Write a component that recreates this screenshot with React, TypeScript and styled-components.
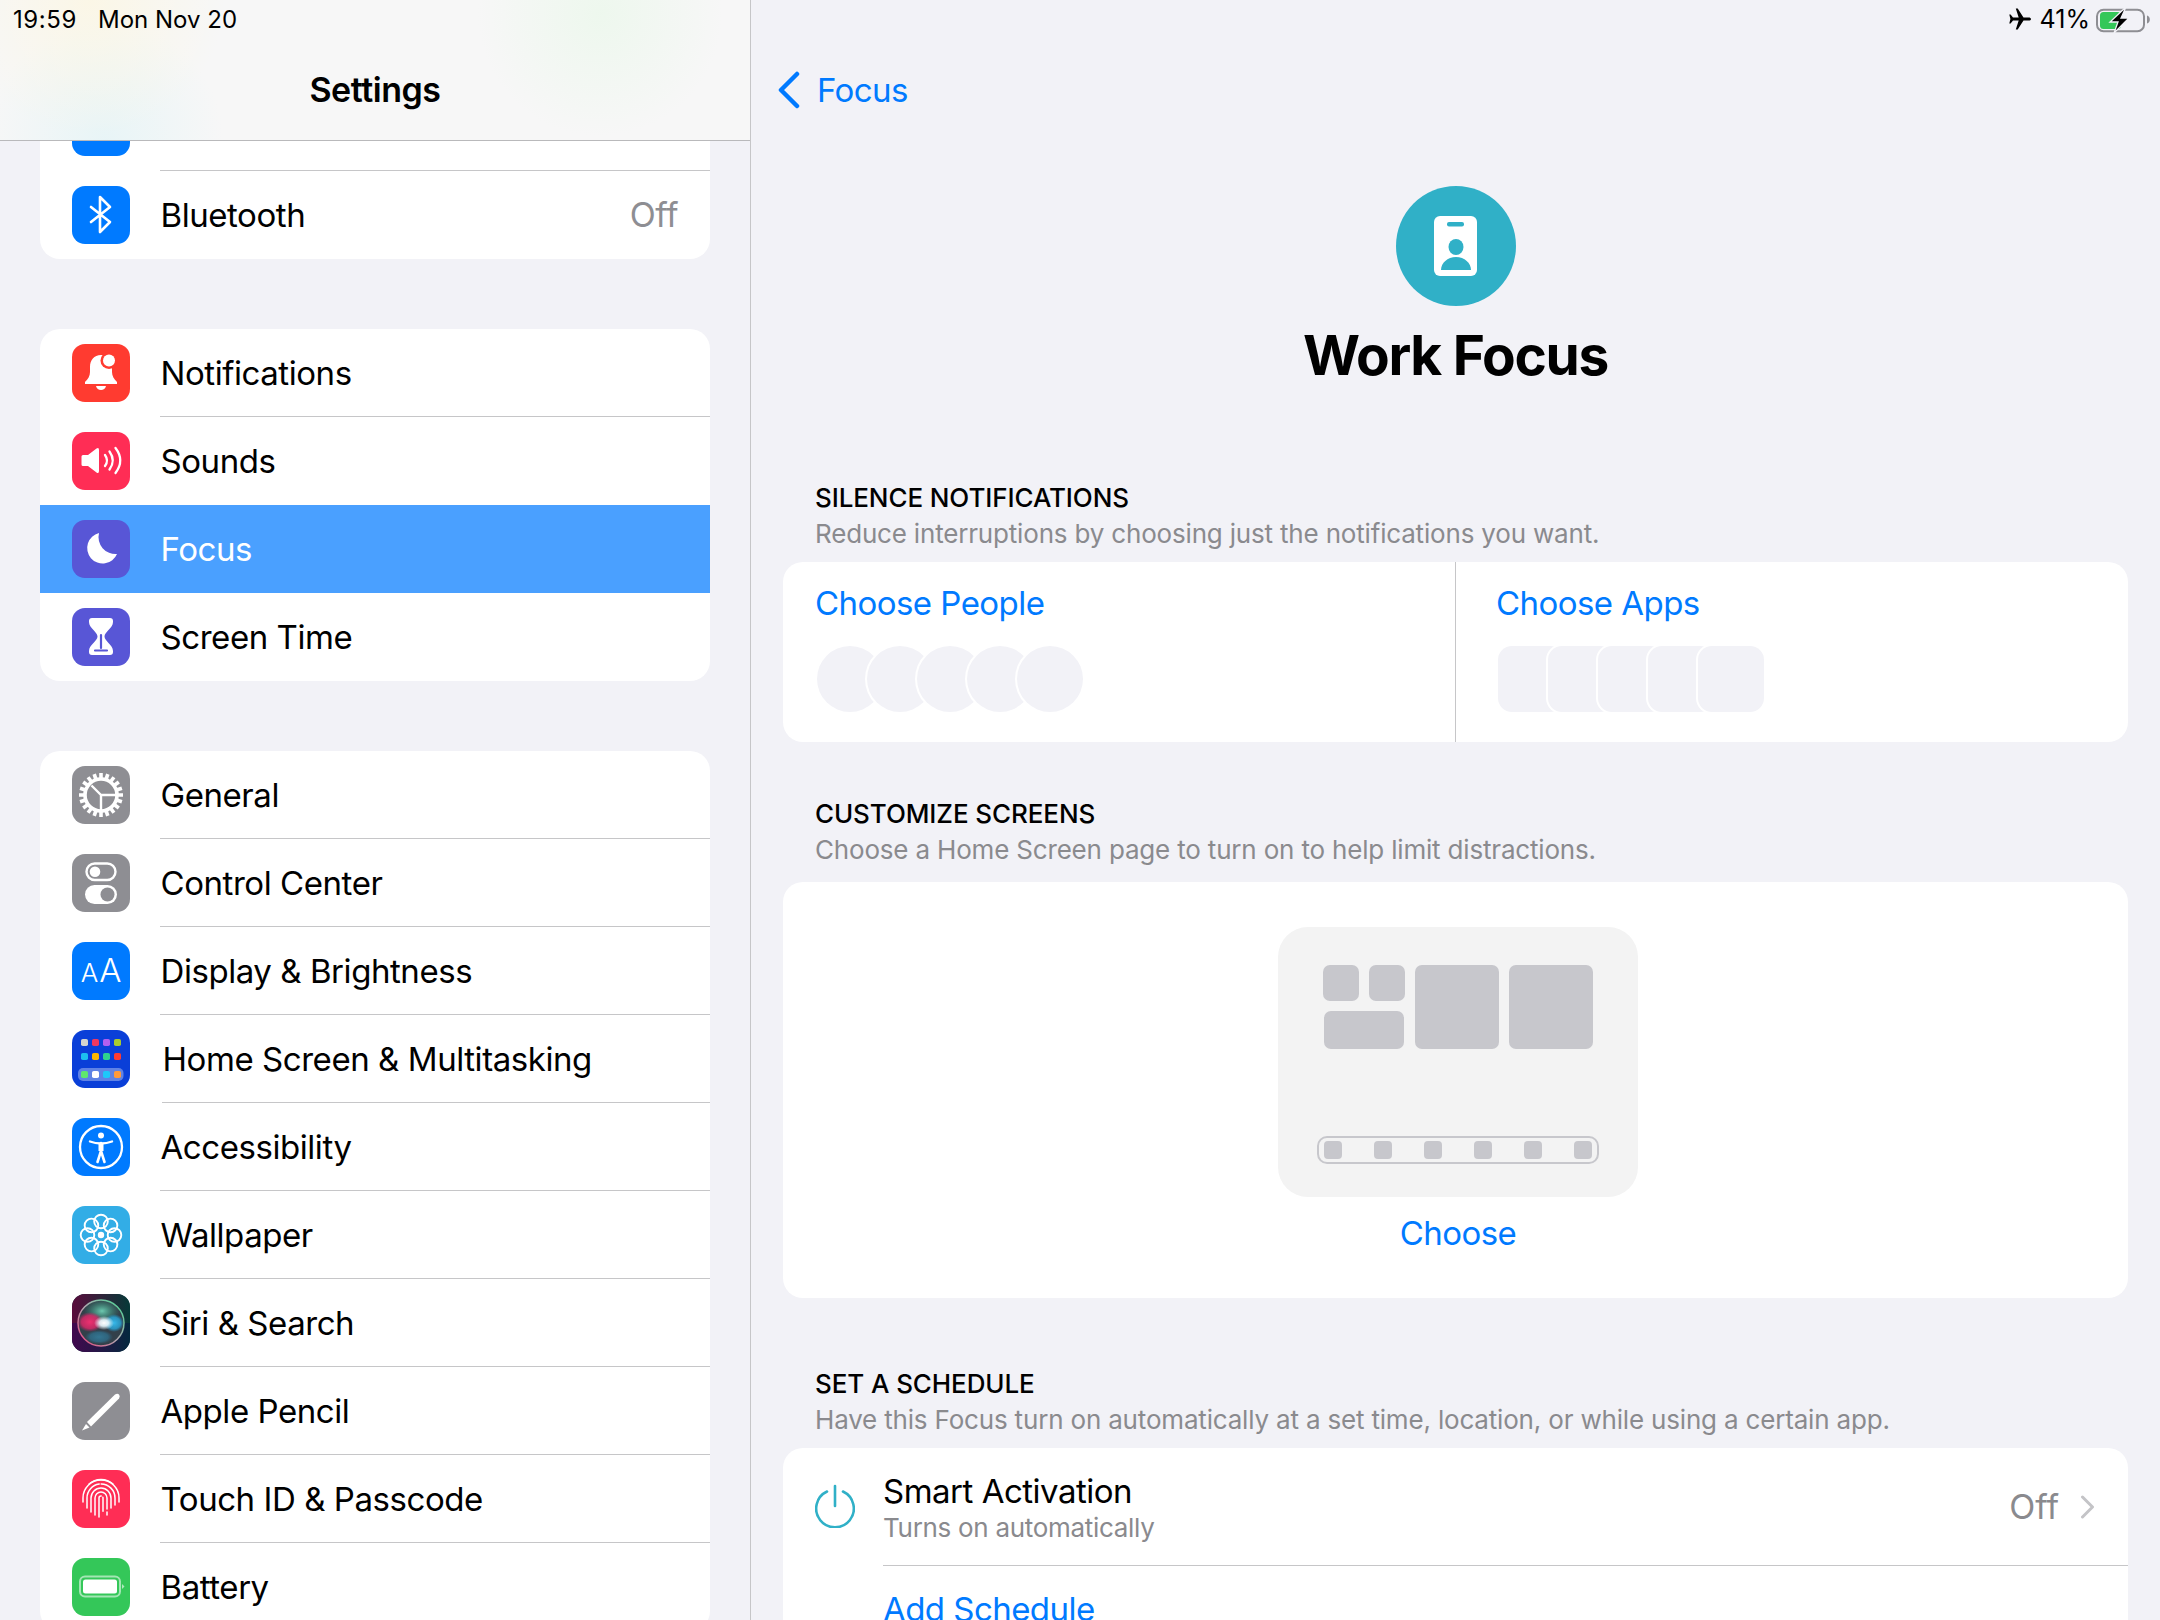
import React, { ReactNode } from 'react';
import styled, { createGlobalStyle } from 'styled-components';

const GlobalStyle = createGlobalStyle`
  html, body {
    margin: 0;
    padding: 0;
    background: #f2f2f7;
    font-family: Inter, "Noto Sans", sans-serif;
    color: #000;
  }
  * { box-sizing: border-box; }
`;

const Screen = styled.div`
  display: flex;
  width: 2160px;
  height: 1620px;
  overflow: hidden;
  background: #f2f2f7;
`;

/* ---------- sidebar ---------- */

const Sidebar = styled.aside`
  display: flex;
  flex-direction: column;
  width: 751px;
  height: 100%;
  border-right: 1px solid #c6c6c8;
  overflow: hidden;
`;

const SidebarHeader = styled.header`
  position: relative;
  z-index: 2;
  flex: none;
  height: 141px;
  border-bottom: 1px solid #b9b9bb;
  background:
    radial-gradient(circle at 12% 0%, rgba(255, 246, 214, 0.5), transparent 20%),
    radial-gradient(circle at 80% 10%, rgba(226, 248, 226, 0.45), transparent 20%),
    radial-gradient(circle at 14% 100%, rgba(222, 243, 246, 0.6), transparent 18%),
    #f7f7f7;
`;

const Clock = styled.div`
  display: flex;
  gap: 21px;
  height: 40px;
  padding-left: 13px;
  font-size: 24px;
  line-height: 40px;
`;

const ClockTime = styled.span`
  letter-spacing: 0.6px;
`;

const SidebarTitle = styled.h1`
  margin: 0;
  height: 66px;
  margin-top: 17px;
  text-align: center;
  font-size: 34px;
  line-height: 66px;
  font-weight: 600;
  letter-spacing: -0.45px;
`;

const SidebarScroll = styled.div`
  flex: 1;
  min-height: 0;
  overflow: hidden;
`;

const SidebarContent = styled.div`
  display: flex;
  flex-direction: column;
  margin-top: -58px;
  padding: 0 40px;
`;

const Group = styled.section<{ $after?: number }>`
  flex: none;
  margin-bottom: ${(p) => p.$after ?? 70}px;
  border-radius: 20px;
  background: #fff;
  overflow: hidden;
`;

const Row = styled.div<{ $selected?: boolean }>`
  display: flex;
  align-items: center;
  height: 88px;
  padding-left: 32px;
  background: ${(p) => (p.$selected ? '#4aa0ff' : 'transparent')};
  color: ${(p) => (p.$selected ? '#fff' : '#000')};
`;

const Tile = styled.div<{ $bg: string }>`
  position: relative;
  flex: none;
  width: 58px;
  height: 58px;
  border-radius: 13px;
  background: ${(p) => p.$bg};
  overflow: hidden;
  svg { display: block; }
`;

const RowBody = styled.div<{ $line?: boolean; $shift?: number }>`
  display: flex;
  align-items: center;
  justify-content: space-between;
  flex: 1;
  height: 100%;
  margin-left: ${(p) => 30 + (p.$shift ?? 0)}px;
  padding-right: 32px;
  border-bottom: 1px solid ${(p) => (p.$line ? '#c6c6c8' : 'transparent')};
`;

const RowLabel = styled.span`
  padding-left: 0.5px;
  font-size: 33px;
  line-height: 42px;
  letter-spacing: -0.44px;
`;

const RowValue = styled.span`
  font-size: 34px;
  line-height: 42px;
  color: #8e8e93;
  letter-spacing: -0.5px;
`;

const LetterMark = styled.div`
  display: flex;
  align-items: baseline;
  justify-content: center;
  gap: 1px;
  height: 100%;
  padding-top: 7px;
  color: #fff;
  font-weight: 300;
`;

const SmallLetter = styled.span`
  font-size: 26px;
  line-height: 42px;
`;

const LargeLetter = styled.span`
  font-size: 33px;
  line-height: 42px;
`;

/* ---------- sidebar icons ---------- */

const Draw = ({ children }: { children: ReactNode }) => (
  <svg width="58" height="58" viewBox="0 0 58 58" fill="none">
    {children}
  </svg>
);

const BluetoothIcon = () => (
  <Draw>
    <path d="M19 21 38 36 28 46V11l10 10-19 15" stroke="#fff" strokeWidth="2.6" strokeLinejoin="round" strokeLinecap="round" />
  </Draw>
);

const BellIcon = () => (
  <Draw>
    <path d="M29 11c-7 0-11 5-11 12v5c0 4-2 7-5 10v2h32v-2c-3-3-5-6-5-10v-5c0-7-4-12-11-12z" fill="#fff" />
    <path d="M24 42h10c-.6 2.6-2.6 4-5 4s-4.400-1.400-5-4z" fill="#fff" />
    <circle cx="37" cy="16.500" r="8.500" fill="#ff3b30" />
    <circle cx="37" cy="16.500" r="6" fill="#fff" />
  </Draw>
);

const SpeakerIcon = () => (
  <Draw>
    <path d="M11 23h5l8.500-6.500q2.500-1.500 2.500 1.500v21q0 3-2.500 1.500L16 34h-5q-1.500 0-1.500-1.500v-8q0-1.500 1.500-1.500z" fill="#fff" />
    <path d="M33 23q4 5.500 0 11M37.500 19.500q6.500 9 0 18M43.500 16q9.500 12.500 0 25" stroke="#fff" strokeWidth="2.300" strokeLinecap="round" />
  </Draw>
);

const MoonIcon = () => (
  <Draw>
    <path d="M27 13A15.500 15.500 0 1 0 45 34 17 17 0 0 1 27 13z" fill="#fff" />
  </Draw>
);

const HourglassIcon = () => (
  <Draw>
    <path d="M20 10h18q3 0 3 3v1c0 6-8.500 10-8.500 14.500S41 37 41 43v1q0 3-3 3H20q-3 0-3-3v-1c0-6 8.500-10 8.500-14.500S17 20 17 14v-1q0-3 3-3z" fill="#fff" />
    <path d="M29 27v13M23 42.500h12" stroke="#5856d6" strokeWidth="2.200" strokeLinecap="round" />
  </Draw>
);

const GearIcon = () => (
  <Draw>
    {Array.from({ length: 20 }, (_, i) => (
      <line key={i} x1="29" y1="7" x2="29" y2="12" stroke="#fff" strokeWidth="3.600" transform={`rotate(${i * 18} 29 29)`} />
    ))}
    <circle cx="29" cy="29" r="16" stroke="#fff" strokeWidth="3.600" />
    <path d="M29 29 19.500 19.500M29 29H45M29 29V44.500" stroke="#fff" strokeWidth="2.400" />
  </Draw>
);

const SwitchesIcon = () => (
  <Draw>
    <rect x="14.500" y="9.500" width="29" height="16.500" rx="8.250" stroke="#fff" strokeWidth="2.400" />
    <circle cx="23" cy="17.800" r="5.300" fill="#fff" />
    <rect x="13" y="31" width="32" height="19" rx="9.500" fill="#fff" />
    <circle cx="35.500" cy="40.500" r="7" fill="#8e8e93" />
  </Draw>
);

const SpringPads = [
  ['#d4d4cf', '#f0385f', '#b25ff0', '#a8cc2e'],
  ['#1cc0f0', '#fcb800', '#2fd08f', '#ff3b30'],
  ['#5fe86d', '#ffffff', '#1dc8fa', '#ff9a3c'],
];

const HomeGridIcon = () => (
  <Draw>
    <rect x="6" y="38" width="45.500" height="13" rx="5" fill="#fff" opacity="0.35" />
    {SpringPads.map((colors, r) =>
      colors.map((c, i) => (
        <rect key={`${r}-${i}`} x={9 + i * 11} y={[9, 23, 41][r]} width="7" height="7" rx="1.800" fill={c} />
      )),
    )}
  </Draw>
);

const AccessibilityIcon = () => (
  <Draw>
    <circle cx="29" cy="29" r="21" stroke="#fff" strokeWidth="2.300" />
    <circle cx="29" cy="17.500" r="3" fill="#fff" />
    <path d="M18 23.500c4 1.500 7 2 11 2s7-.5 11-2" stroke="#fff" strokeWidth="2.400" strokeLinecap="round" />
    <path d="M29 25v8l-3.500 11M29 33l3.500 11" stroke="#fff" strokeWidth="2.600" strokeLinecap="round" strokeLinejoin="round" />
    <path d="M26.500 25h5v8h-5z" fill="#fff" />
  </Draw>
);

const FlowerIcon = () => (
  <Draw>
    {Array.from({ length: 8 }, (_, i) => (
      <circle key={i} cx="29" cy="15.500" r="6.800" stroke="#fff" strokeWidth="1.900" transform={`rotate(${i * 45} 29 29)`} />
    ))}
    <circle cx="29" cy="29" r="3.200" fill="#fff" />
  </Draw>
);

const SiriIcon = () => (
  <Draw>
    <defs>
      <linearGradient id="siriTop" x1="0" y1="0" x2="1" y2="0">
        <stop offset="0" stopColor="#5a0c3c" />
        <stop offset="1" stopColor="#063a38" />
      </linearGradient>
      <linearGradient id="siriBottom" x1="0" y1="0" x2="1" y2="0">
        <stop offset="0" stopColor="#42084e" />
        <stop offset="1" stopColor="#04283e" />
      </linearGradient>
      <linearGradient id="siriRing" x1="0" y1="1" x2="1" y2="0">
        <stop offset="0" stopColor="#e8407a" />
        <stop offset="0.5" stopColor="#b0a8b0" />
        <stop offset="1" stopColor="#40d890" />
      </linearGradient>
      <radialGradient id="siriGlow">
        <stop offset="0" stopColor="#fff" />
        <stop offset="0.45" stopColor="#eafaff" stopOpacity="0.9" />
        <stop offset="1" stopColor="#e8f8ff" stopOpacity="0" />
      </radialGradient>
      <radialGradient id="siriPink">
        <stop offset="0" stopColor="#ee3070" />
        <stop offset="0.65" stopColor="#d82868" stopOpacity="0.85" />
        <stop offset="1" stopColor="#c02060" stopOpacity="0" />
      </radialGradient>
      <radialGradient id="siriBlue">
        <stop offset="0" stopColor="#36b8ea" />
        <stop offset="0.65" stopColor="#2aa0d0" stopOpacity="0.85" />
        <stop offset="1" stopColor="#2090c0" stopOpacity="0" />
      </radialGradient>
      <radialGradient id="siriGreen">
        <stop offset="0" stopColor="#6ec8b0" />
        <stop offset="1" stopColor="#30a080" stopOpacity="0" />
      </radialGradient>
    </defs>
    <rect width="58" height="29" fill="url(#siriTop)" />
    <rect y="29" width="58" height="29" fill="url(#siriBottom)" />
    <circle cx="29" cy="29" r="23" fill="#33404a" />
    <ellipse cx="30" cy="17" rx="18" ry="12" fill="url(#siriGreen)" />
    <ellipse cx="27" cy="43" rx="14" ry="7" fill="url(#siriBlue)" opacity="0.45" />
    <ellipse cx="18" cy="28" rx="13" ry="10" fill="url(#siriPink)" />
    <ellipse cx="42" cy="29" rx="10" ry="9" fill="url(#siriBlue)" />
    <circle cx="29" cy="29" r="23" stroke="url(#siriRing)" strokeWidth="1.500" />
    <ellipse cx="32" cy="29" rx="10" ry="7" fill="url(#siriGlow)" />
  </Draw>
);

const PencilIcon = () => (
  <Draw>
    <path d="M15 40 43 12.500q2.500-1.500 4 0t0 4L19 44.500z" fill="#fff" />
    <path d="M14 42l3.500 3.500-7.500 3z" fill="#fff" />
  </Draw>
);

const FingerprintIcon = () => (
  <Draw>
    <g stroke="#fff" strokeWidth="1.500" strokeLinecap="round">
      <path d="M11 32v-4a18 18 0 0 1 36 0v4" />
      <path d="M15 38v-10a14 14 0 0 1 28 0v7" strokeDasharray="30 2 40" />
      <path d="M19 42V28a10 10 0 0 1 20 0v10" />
      <path d="M23 45V28a6 6 0 0 1 12 0v11M35 42v3" />
      <path d="M27 47V28a2 2 0 0 1 4 0v19" strokeDasharray="22 2 14" />
      <path d="M17 14a18 18 0 0 1 24 0" />
    </g>
  </Draw>
);

const BatteryTileIcon = () => (
  <Draw>
    <rect x="8" y="18.500" width="40" height="20" rx="5" stroke="#fff" strokeOpacity="0.55" strokeWidth="2" />
    <rect x="11" y="21.500" width="34" height="14" rx="2.500" fill="#fff" />
    <path d="M50 26l2.500 2.500L50 31z" fill="#fff" fillOpacity="0.6" />
  </Draw>
);

interface SettingsRow {
  label?: string;
  tile: string;
  icon?: ReactNode;
  value?: string;
  selected?: boolean;
  shift?: number;
}

const groups: { after: number; rows: SettingsRow[] }[] = [
  {
    after: 70,
    rows: [
      { tile: '#007aff' },
      { label: 'Bluetooth', tile: '#007aff', icon: <BluetoothIcon />, value: 'Off' },
    ],
  },
  {
    after: 70,
    rows: [
      { label: 'Notifications', tile: '#ff3b30', icon: <BellIcon /> },
      { label: 'Sounds', tile: '#ff2d55', icon: <SpeakerIcon /> },
      { label: 'Focus', tile: '#5856d6', icon: <MoonIcon />, selected: true },
      { label: 'Screen Time', tile: '#5856d6', icon: <HourglassIcon /> },
    ],
  },
  {
    after: 0,
    rows: [
      { label: 'General', tile: '#8e8e93', icon: <GearIcon /> },
      { label: 'Control Center', tile: '#8e8e93', icon: <SwitchesIcon /> },
      {
        label: 'Display & Brightness',
        tile: '#007aff',
        icon: (
          <LetterMark>
            <SmallLetter>A</SmallLetter>
            <LargeLetter>A</LargeLetter>
          </LetterMark>
        ),
      },
      { label: 'Home Screen & Multitasking', tile: '#0a3fd8', icon: <HomeGridIcon />, shift: 2 },
      { label: 'Accessibility', tile: '#007aff', icon: <AccessibilityIcon /> },
      { label: 'Wallpaper', tile: '#32ade6', icon: <FlowerIcon /> },
      { label: 'Siri & Search', tile: '#123a44', icon: <SiriIcon /> },
      { label: 'Apple Pencil', tile: '#8e8e93', icon: <PencilIcon /> },
      { label: 'Touch ID & Passcode', tile: '#ff2d55', icon: <FingerprintIcon /> },
      { label: 'Battery', tile: '#34c759', icon: <BatteryTileIcon /> },
    ],
  },
];

/* ---------- detail pane ---------- */

const Pane = styled.main`
  display: flex;
  flex-direction: column;
  flex: 1;
  min-width: 0;
  height: 100%;
  padding: 0 32px;
  overflow: hidden;
`;

const StatusBar = styled.div`
  display: flex;
  align-items: center;
  justify-content: flex-end;
  flex: none;
  height: 38px;
  margin-right: -22px;
  font-size: 25px;
  svg { display: block; }
`;

const BatteryPercent = styled.span`
  margin: 0 4px 0 8px;
`;

const NavBar = styled.nav`
  display: flex;
  align-items: center;
  flex: none;
  height: 104px;
  margin-left: -6px;
  color: #007aff;
  font-size: 33px;
  letter-spacing: -0.6px;
  gap: 16px;
`;

const Hero = styled.div`
  display: flex;
  flex-direction: column;
  align-items: center;
  flex: none;
  margin-top: 44px;
`;

const Avatar = styled.div`
  width: 120px;
  height: 120px;
  border-radius: 50%;
  background: #30b0c7;
  svg { display: block; }
`;

const HeroTitle = styled.h2`
  margin: 15px 0 0;
  font-size: 55px;
  line-height: 68px;
  font-weight: 700;
  letter-spacing: -1.3px;
`;

const SectionLabel = styled.div<{ $top: number }>`
  flex: none;
  margin-top: ${(p) => p.$top}px;
  padding-left: 32px;
  font-size: 26px;
  line-height: 34px;
  font-weight: 500;
  letter-spacing: -0.1px;
`;

const SectionNote = styled.div<{ $after: number }>`
  flex: none;
  margin-bottom: ${(p) => p.$after}px;
  padding-left: 32px;
  font-size: 26px;
  line-height: 38px;
  color: #8a8a8e;
  letter-spacing: -0.18px;
`;

const Card = styled.section`
  flex: none;
  border-radius: 20px;
  background: #fff;
  overflow: hidden;
`;

const ChooserCard = styled(Card)`
  display: grid;
  grid-template-columns: 672px 1fr;
  height: 180px;
`;

const ChooserColumn = styled.div<{ $divided?: boolean; $left: number }>`
  padding: 20px 0 0 ${(p) => p.$left}px;
  border-left: ${(p) => (p.$divided ? '1px solid #c6c6c8' : 'none')};
`;

const LinkText = styled.div`
  color: #007aff;
  font-size: 33px;
  line-height: 42px;
  letter-spacing: -0.55px;
`;

const PlaceholderStack = styled.div`
  display: flex;
  margin: 22px 0 0 2px;
`;

const Placeholder = styled.div<{ $round: boolean }>`
  flex: none;
  width: 66px;
  height: 66px;
  border-radius: ${(p) => (p.$round ? '50%' : '14px')};
  background: #f2f2f7;
  &:not(:first-child) {
    margin-left: -16px;
    box-shadow: 0 0 0 2px #fff;
  }
`;

const ScreensCard = styled(Card)`
  display: flex;
  flex-direction: column;
  align-items: center;
  height: 416px;
  padding: 45px 0 0 5px;
`;

const PagePreview = styled.div`
  flex: none;
  width: 360px;
  height: 270px;
  padding: 38px 45px 0;
  border-radius: 30px;
  background: #f3f3f3;
`;

const WidgetRow = styled.div`
  display: flex;
  gap: 10px;
`;

const WidgetStack = styled.div`
  display: flex;
  flex-wrap: wrap;
  gap: 10px;
  width: 82px;
`;

const Widget = styled.div<{ $w: number; $h: number; $inset?: number }>`
  flex: none;
  width: ${(p) => p.$w}px;
  height: ${(p) => p.$h}px;
  margin-left: ${(p) => p.$inset ?? 0}px;
  border-radius: 7px;
  background: #c7c7cc;
`;

const Dock = styled.div`
  display: flex;
  align-items: center;
  justify-content: space-between;
  width: 282px;
  height: 28px;
  margin: 87px 0 0 -6px;
  padding: 0 5px;
  border: 2px solid #c7c7cc;
  border-radius: 10px;
`;

const DockSlot = styled.div`
  width: 18px;
  height: 18px;
  border-radius: 4px;
  background: #c7c7cc;
`;

const ChooseLink = styled(LinkText)`
  margin-top: 15px;
`;

const ScheduleCard = styled(Card)`
  height: 260px;
`;

const ScheduleRow = styled.div`
  display: flex;
  height: 118px;
  padding-left: 32px;
`;

const PowerSlot = styled.div`
  display: flex;
  align-items: center;
  flex: none;
  width: 40px;
  margin-right: 28px;
  padding-bottom: 2px;
  svg { display: block; }
`;

const ScheduleBody = styled.div`
  display: flex;
  align-items: center;
  justify-content: space-between;
  flex: 1;
  padding-right: 33px;
  border-bottom: 1px solid #c6c6c8;
`;

const ScheduleTitle = styled.div`
  font-size: 33px;
  line-height: 42px;
  letter-spacing: -0.5px;
`;

const ScheduleCaption = styled.div`
  font-size: 26px;
  line-height: 32px;
  color: #8a8a8e;
  letter-spacing: -0.3px;
`;

const Trailing = styled.div`
  display: flex;
  align-items: center;
  gap: 21px;
  color: #8a8a8e;
  font-size: 34px;
  svg { display: block; }
`;

const AddSchedule = styled(LinkText)`
  padding: 22px 0 0 100px;
`;

const AvatarBadge = () => (
  <svg width="120" height="120" viewBox="0 0 120 120">
    <rect x="38" y="30" width="43" height="60" rx="6" fill="#fff" />
    <rect x="51" y="36" width="17" height="4.500" rx="2" fill="#30b0c7" />
    <ellipse cx="60" cy="61" rx="7.500" ry="8" fill="#30b0c7" />
    <path d="M45 84c0-7 6.500-13 15-13s15 6 15 13z" fill="#30b0c7" />
  </svg>
);

const Airplane = () => (
  <svg width="24" height="24" viewBox="0 0 24 24" fill="#000">
    <path d="M23 12c0-1.100-1.100-1.600-2.200-1.600h-5.300L9.700 1.500H7.800l2.900 8.900H5L2.600 7.600H1.300L2.400 12 1.300 16.400h1.300L5 13.600h5.700L7.800 22.500h1.900l5.800-8.900h5.300C21.900 13.600 23 13.100 23 12z" />
  </svg>
);

const BatteryStatus = () => (
  <svg width="56" height="30" viewBox="0 0 56 30" fill="none">
    <rect x="3" y="5.700" width="47" height="21.500" rx="6.500" stroke="#8e8e93" strokeWidth="2" />
    <rect x="6" y="8" width="21" height="17" rx="3.500" fill="#34c759" />
    <path d="M53 11.500c1.800.6 2.800 2 2.800 4s-1 3.400-2.800 4z" fill="#8e8e93" />
    <path d="M32 3 16 18h8l-4 11 15-15h-8l5-11z" fill="#000" stroke="#f2f2f7" strokeWidth="1.300" />
  </svg>
);

const BackChevron = () => (
  <svg width="24" height="38" viewBox="0 0 24 38" fill="none">
    <path d="M20 3 4 19l16 16" stroke="#007aff" strokeWidth="4.500" strokeLinecap="round" strokeLinejoin="round" />
  </svg>
);

const PowerIcon = () => (
  <svg width="40" height="44" viewBox="0 0 40 44" fill="none">
    <path d="M12 7.500a18.800 18.800 0 1 0 16 0" stroke="#30b0c7" strokeWidth="2.600" strokeLinecap="round" />
    <path d="M20 2v20" stroke="#30b0c7" strokeWidth="2.600" strokeLinecap="round" />
  </svg>
);

const ForwardChevron = () => (
  <svg width="15" height="24" viewBox="0 0 15 24" fill="none">
    <path d="M2.500 2 12.500 12 2.500 22" stroke="#c4c4c7" strokeWidth="3" strokeLinecap="round" strokeLinejoin="round" />
  </svg>
);

const App: React.FC = () => (
  <Screen>
    <GlobalStyle />
    <Sidebar>
      <SidebarHeader>
        <Clock>
          <ClockTime>19:59</ClockTime>
          <span>Mon Nov 20</span>
        </Clock>
        <SidebarTitle>Settings</SidebarTitle>
      </SidebarHeader>
      <SidebarScroll>
        <SidebarContent>
          {groups.map((group, g) => (
            <Group key={g} $after={group.after}>
              {group.rows.map((row, i) => (
                <Row key={i} $selected={row.selected}>
                  <Tile $bg={row.tile}>{row.icon}</Tile>
                  <RowBody
                    $shift={row.shift}
                    $line={
                      i < group.rows.length - 1 &&
                      !row.selected &&
                      !group.rows[i + 1].selected
                    }
                  >
                    <RowLabel>{row.label}</RowLabel>
                    {row.value && <RowValue>{row.value}</RowValue>}
                  </RowBody>
                </Row>
              ))}
            </Group>
          ))}
        </SidebarContent>
      </SidebarScroll>
    </Sidebar>

    <Pane>
      <StatusBar>
        <Airplane />
        <BatteryPercent>41%</BatteryPercent>
        <BatteryStatus />
      </StatusBar>
      <NavBar>
        <BackChevron />
        <span>Focus</span>
      </NavBar>
      <Hero>
        <Avatar>
          <AvatarBadge />
        </Avatar>
        <HeroTitle>Work Focus</HeroTitle>
      </Hero>

      <SectionLabel $top={92}>SILENCE NOTIFICATIONS</SectionLabel>
      <SectionNote $after={9}>
        Reduce interruptions by choosing just the notifications you want.
      </SectionNote>
      <ChooserCard>
        <ChooserColumn $left={32}>
          <LinkText>Choose People</LinkText>
          <PlaceholderStack>
            {[0, 1, 2, 3, 4].map((n) => (
              <Placeholder key={n} $round />
            ))}
          </PlaceholderStack>
        </ChooserColumn>
        <ChooserColumn $divided $left={40}>
          <LinkText>Choose Apps</LinkText>
          <PlaceholderStack>
            {[0, 1, 2, 3, 4].map((n) => (
              <Placeholder key={n} $round={false} />
            ))}
          </PlaceholderStack>
        </ChooserColumn>
      </ChooserCard>

      <SectionLabel $top={55}>CUSTOMIZE SCREENS</SectionLabel>
      <SectionNote $after={13}>
        Choose a Home Screen page to turn on to help limit distractions.
      </SectionNote>
      <ScreensCard>
        <PagePreview>
          <WidgetRow>
            <WidgetStack>
              <Widget $w={36} $h={36} />
              <Widget $w={36} $h={36} />
              <Widget $w={80} $h={38} $inset={1} />
            </WidgetStack>
            <Widget $w={84} $h={84} />
            <Widget $w={84} $h={84} />
          </WidgetRow>
          <Dock>
            {[0, 1, 2, 3, 4, 5].map((n) => (
              <DockSlot key={n} />
            ))}
          </Dock>
        </PagePreview>
        <ChooseLink>Choose</ChooseLink>
      </ScreensCard>

      <SectionLabel $top={69}>SET A SCHEDULE</SectionLabel>
      <SectionNote $after={9}>
        Have this Focus turn on automatically at a set time, location, or while using a certain app.
      </SectionNote>
      <ScheduleCard>
        <ScheduleRow>
          <PowerSlot>
            <PowerIcon />
          </PowerSlot>
          <ScheduleBody>
            <div>
              <ScheduleTitle>Smart Activation</ScheduleTitle>
              <ScheduleCaption>Turns on automatically</ScheduleCaption>
            </div>
            <Trailing>
              <span>Off</span>
              <ForwardChevron />
            </Trailing>
          </ScheduleBody>
        </ScheduleRow>
        <AddSchedule>Add Schedule</AddSchedule>
      </ScheduleCard>
    </Pane>
  </Screen>
);

export default App;
